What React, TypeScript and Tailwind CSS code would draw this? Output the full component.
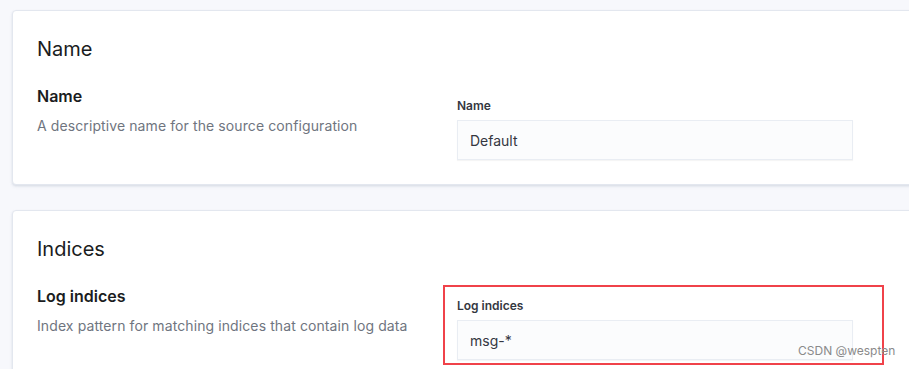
import React from 'react'

type FieldProps = {
  title: string
  description: string
  label: string
  value: string
}

function DescribedField({ title, description, label, value }: FieldProps) {
  return (
    <div className="flex mt-[21px]">
      <div className="w-[420px] shrink-0">
        <div className="text-[16px] leading-6 font-semibold text-[#1a1c21]">{title}</div>
        <div className="mt-[8px] text-[14px] leading-5 tracking-[0.1px] text-[#6f7580]">{description}</div>
      </div>
      <div className="pt-[14px]">
        <div className="text-[12px] leading-4 font-semibold text-[#343741]">{label}</div>
        <div className="mt-[6px] w-[396px] h-10 flex items-center px-3 bg-[#fbfcfd] border border-[#e9edf3] shadow-[0_1px_1px_rgba(0,0,0,0.04)] text-[14px] text-[#343741]">
          {value}
        </div>
      </div>
    </div>
  )
}

function Panel({ heading, children }: { heading: string; children: React.ReactNode }) {
  return (
    <div className="w-[940px] bg-white border border-[#e3e7ef] rounded-[4px] p-6 shadow-[0_1px_2px_rgba(152,162,179,0.2),0_2px_3px_rgba(152,162,179,0.12)]">
      <h2 className="text-[20px] leading-7 text-[#1a1c21]">{heading}</h2>
      {children}
    </div>
  )
}

export default function App() {
  return (
    <div
      className="relative w-[909px] h-[369px] overflow-hidden bg-[#f7f8fc] pl-3 pt-[10px]"
      style={{ fontFamily: 'Inter, "Noto Sans", sans-serif' }}
    >
      <div className="flex flex-col gap-[25px]">
        <Panel heading="Name">
          <DescribedField
            title="Name"
            description="A descriptive name for the source configuration"
            label="Name"
            value="Default"
          />
        </Panel>
        <Panel heading="Indices">
          <DescribedField
            title="Log indices"
            description="Index pattern for matching indices that contain log data"
            label="Log indices"
            value="msg-*"
          />
        </Panel>
      </div>

      {/* annotation box */}
      <div className="absolute left-[443px] top-[285px] w-[441px] h-[80px] border-2 border-[#f0424a]" />

      <div className="absolute left-[798px] top-[343px] text-[12px] leading-[16px] text-[#8a8a8a] whitespace-nowrap">
        CSDN @wespten
      </div>
    </div>
  )
}
